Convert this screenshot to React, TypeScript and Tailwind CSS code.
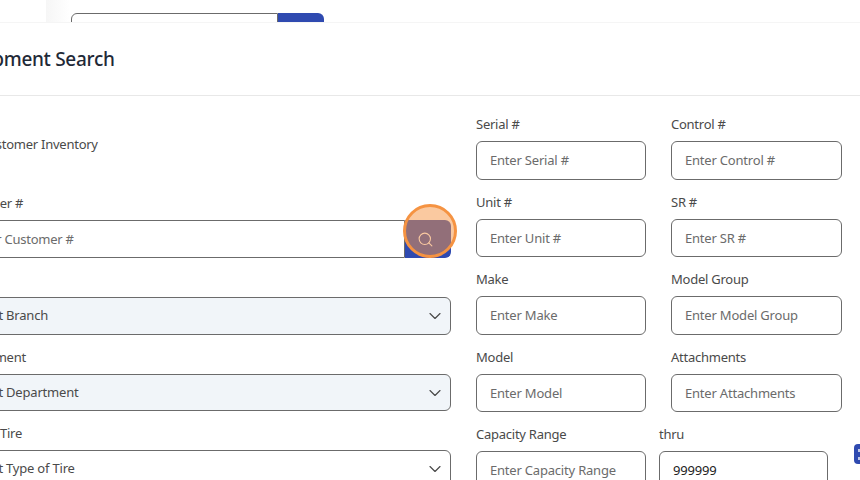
import React from "react";
import { ChevronDown, Search } from "lucide-react";

const font = "font-['Noto_Sans','Open_Sans',sans-serif]";

function Field({ label, placeholder, value }: { label: string; placeholder?: string; value?: string }) {
  return (
    <div>
      <label className="block h-[26px] text-[13px] leading-[18px] tracking-[-0.25px] text-[#4a4a4a]">{label}</label>
      <div
        className={`flex h-[38.5px] items-center rounded-md border border-[#6b6b6b] bg-white pl-[13px] pt-[1px] text-[13px] tracking-[-0.2px] ${
          value ? "text-[#222]" : "text-[#6b6b6b]"
        }`}
      >
        {value || placeholder}
      </div>
    </div>
  );
}

function SelectField({ label, placeholder, filled }: { label: string; placeholder: string; filled?: boolean }) {
  return (
    <div>
      <label className="block h-[26px] text-[13px] leading-[18px] tracking-[-0.25px] text-[#4a4a4a]">{label}</label>
      <div
        className={`flex h-[37.7px] items-center justify-between rounded-md border border-[#6b6b6b] pl-[13px] pr-[5px] text-[13px] tracking-[-0.2px] text-[#4a4a4a] ${
          filled ? "bg-[#f1f5f9]" : "bg-white"
        }`}
      >
        {placeholder}
        <ChevronDown className="h-[20px] w-[20px] text-[#4a4a4a]" strokeWidth={1.4} />
      </div>
    </div>
  );
}

export default function App() {
  return (
    <div className={`relative h-[480px] w-[860px] overflow-hidden bg-white ${font}`}>
      {/* page behind the modal */}
      <div className="flex h-[22px] overflow-hidden bg-white">
        <div className="ml-[46px] h-full w-[24px] bg-gradient-to-r from-[#f6f6f6] to-white" />
        <div className="ml-[1px] mt-[13px] flex h-[30px]">
          <div className="h-full w-[207px] rounded-l-md border border-[#6b6b6b] bg-white" />
          <div className="h-full w-[46px] rounded-r-md bg-[#2f4ab0]" />
        </div>
      </div>

      {/* modal */}
      <div className="border-t border-[#f5f5f5] bg-white">
        <div className="flex h-[73px] items-center border-b border-[#e8e8e8] pt-[1px]">
          <h2 className="ml-[-46px] whitespace-nowrap text-[19px] font-medium tracking-[-0.3px] text-[#1f2937]">
            Equipment Search
          </h2>
        </div>

        <div className="flex">
          {/* left column */}
          <div className="ml-[-46px] flex w-[497px] flex-col gap-y-[13px]">
            <div className="-mb-[13px] flex h-[98px] items-start pt-[39px] text-[13px] tracking-[-0.25px] text-[#4a4a4a]">
              <span className="mr-[10px] mt-[1px] h-4 w-4 rounded border border-[#6b6b6b]" />
              Customer Inventory
            </div>
            <div>
              <label className="block h-[26px] text-[13px] leading-[18px] tracking-[-0.25px] text-[#4a4a4a]">
                Customer #
              </label>
              <div className="flex h-[38px]">
                <div className="flex flex-1 items-center rounded-l-md border border-[#6b6b6b] pl-[15px] pt-[1px] text-[13px] tracking-[-0.25px] text-[#6b6b6b]">
                  Enter Customer #
                </div>
                <div className="flex w-[46px] items-center justify-center rounded-r-md bg-[#2f4ab0]">
                  <Search className="mr-[5px] h-[17px] w-[17px] text-white" strokeWidth={1.5} />
                </div>
              </div>
            </div>
            <SelectField label="Branch" placeholder="Select Branch" filled />
            <SelectField label="Department" placeholder="Select Department" filled />
            <SelectField label="Type of Tire" placeholder="Select Type of Tire" />
          </div>

          {/* right columns */}
          <div className="ml-[25px] grid w-[366px] grid-cols-[170px_171px] gap-x-[25px] gap-y-[13px] pt-[19px]">
            <Field label="Serial #" placeholder="Enter Serial #" />
            <Field label="Control #" placeholder="Enter Control #" />
            <Field label="Unit #" placeholder="Enter Unit #" />
            <Field label="SR #" placeholder="Enter SR #" />
            <Field label="Make" placeholder="Enter Make" />
            <Field label="Model Group" placeholder="Enter Model Group" />
            <Field label="Model" placeholder="Enter Model" />
            <Field label="Attachments" placeholder="Enter Attachments" />
            <Field label="Capacity Range" placeholder="Enter Capacity Range" />
            <div className="ml-[-12px] w-[169px]">
              <Field label="thru" value="999999" />
            </div>
          </div>
        </div>
      </div>

      {/* click highlight */}
      <div className="absolute left-[403px] top-[204px] h-[54px] w-[54px] rounded-full border-[3px] border-[#f59342] bg-[#f59342]/50" />

      {/* scroll badge */}
      <div className="absolute left-[854px] top-[444px] flex h-[20px] w-[6px] flex-col items-end justify-center gap-[5px] rounded-l-sm bg-[#2f4ab0]">
        <span className="h-[3px] w-[2px] bg-white/70" />
        <span className="h-[3px] w-[2px] bg-white/70" />
      </div>
    </div>
  );
}
